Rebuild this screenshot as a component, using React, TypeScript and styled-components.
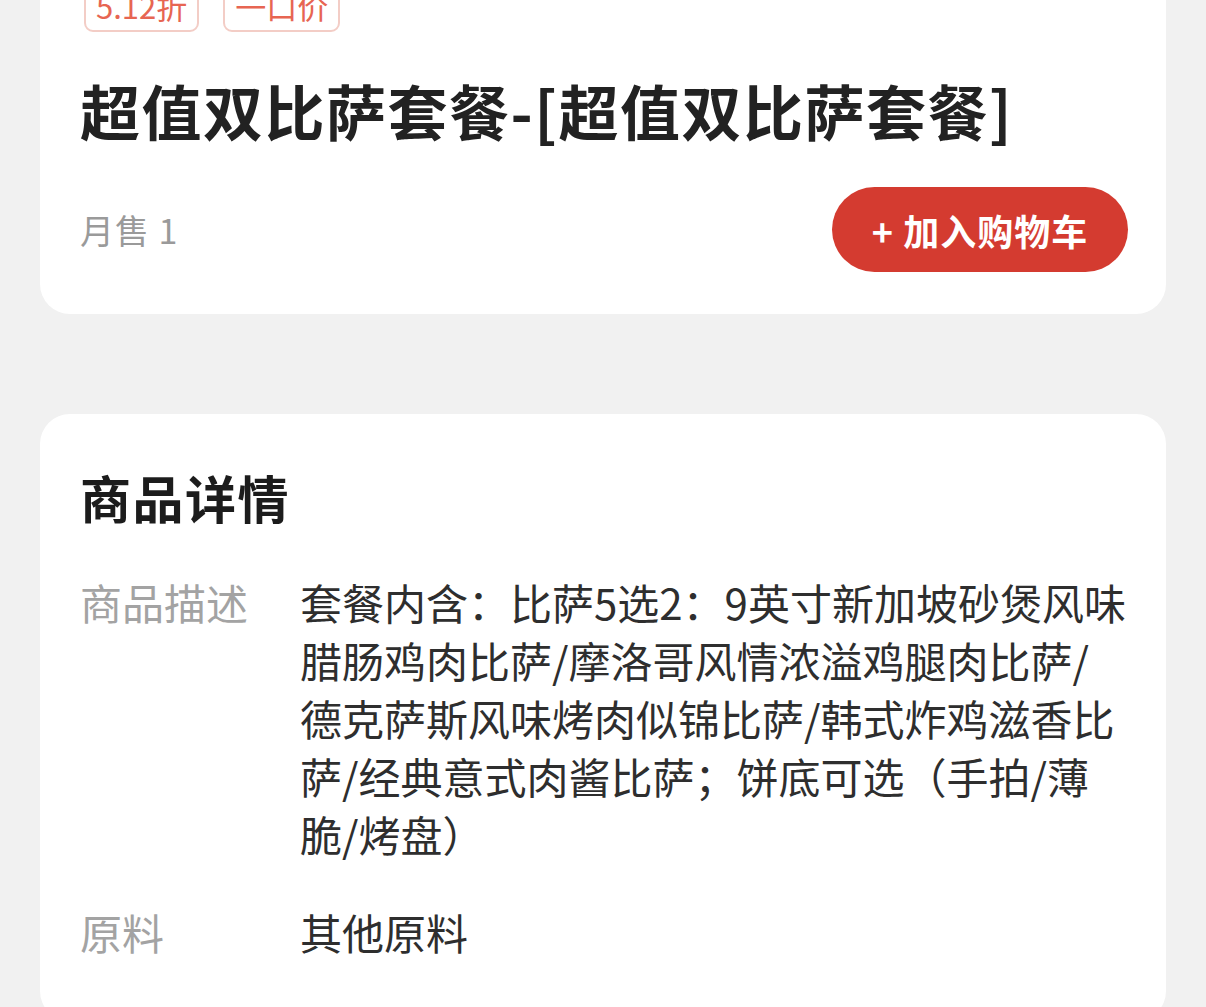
import styled, { createGlobalStyle } from 'styled-components'

const GlobalStyle = createGlobalStyle`
  html, body {
    margin: 0;
    padding: 0;
    background-color: #f1f1f1;
    font-family: "Noto Sans CJK SC", "Noto Sans", sans-serif;
  }
`

const Page = styled.div`
  display: flex;
  flex-direction: column;
  gap: 100px;
  padding: 0 40px;
  margin-top: -42px;
  height: 1049px;
  overflow: hidden;
`

const Card = styled.section`
  background-color: #ffffff;
  border-radius: 30px;
  padding: ${(p: { $pad: string }) => p.$pad};
`

const TagRow = styled.div`
  display: flex;
  gap: 24px;
  padding-left: 4px;
`

const Tag = styled.span`
  display: inline-flex;
  align-items: center;
  height: 50px;
  padding: 0 10px;
  border: 2px solid #f3cdc6;
  border-radius: 9px;
  color: #e76552;
  font-size: 31px;
  line-height: 1;
`

const Title = styled.h1`
  margin: 42px 0 0;
  font-size: 60px;
  line-height: 72px;
  font-weight: 700;
  letter-spacing: 1.5px;
  color: #222222;
  white-space: nowrap;
`

const SaleRow = styled.div`
  display: flex;
  justify-content: space-between;
  align-items: center;
  margin-top: 41px;
`

const Sold = styled.span`
  font-size: 34px;
  letter-spacing: 1px;
  color: #9a9a9a;
`

const CartButton = styled.button`
  display: flex;
  align-items: center;
  justify-content: center;
  width: 296px;
  height: 85px;
  margin-right: -2px;
  border: none;
  border-radius: 43px;
  background-color: #d43b30;
  color: #ffffff;
  font-family: inherit;
  font-size: 36px;
  font-weight: 700;
  letter-spacing: 1px;
  cursor: pointer;
`

const Heading = styled.h2`
  margin: 0;
  font-size: 51px;
  line-height: 60px;
  font-weight: 700;
  letter-spacing: 1.5px;
  color: #1c1c1c;
`

const InfoList = styled.dl`
  display: flex;
  flex-direction: column;
  gap: 40px;
  margin: 46px 0 0;
`

const InfoRow = styled.div`
  display: grid;
  grid-template-columns: 220px 1fr;
  font-size: 42px;
  line-height: 58px;
`

const Label = styled.dt`
  color: #a3a3a3;
`

const Value = styled.dd`
  margin: 0;
  color: #2e2e2e;

  span {
    display: block;
    white-space: nowrap;
  }
`

const description = [
  '套餐内含：比萨5选2：9英寸新加坡砂煲风味',
  '腊肠鸡肉比萨/摩洛哥风情浓溢鸡腿肉比萨/',
  '德克萨斯风味烤肉似锦比萨/韩式炸鸡滋香比',
  '萨/经典意式肉酱比萨；饼底可选（手拍/薄',
  '脆/烤盘）',
]

export default function App() {
  return (
    <>
      <GlobalStyle />
      <Page>
        <Card $pad="20px 40px 42px 40px">
          <TagRow>
            <Tag>5.12折</Tag>
            <Tag>一口价</Tag>
          </TagRow>
          <Title>超值双比萨套餐-[超值双比萨套餐]</Title>
          <SaleRow>
            <Sold>月售 1</Sold>
            <CartButton>+ 加入购物车</CartButton>
          </SaleRow>
        </Card>

        <Card $pad="53px 40px 60px 40px">
          <Heading>商品详情</Heading>
          <InfoList>
            <InfoRow>
              <Label>商品描述</Label>
              <Value>
                {description.map((line) => (
                  <span key={line}>{line}</span>
                ))}
              </Value>
            </InfoRow>
            <InfoRow>
              <Label>原料</Label>
              <Value>其他原料</Value>
            </InfoRow>
          </InfoList>
        </Card>
      </Page>
    </>
  )
}
